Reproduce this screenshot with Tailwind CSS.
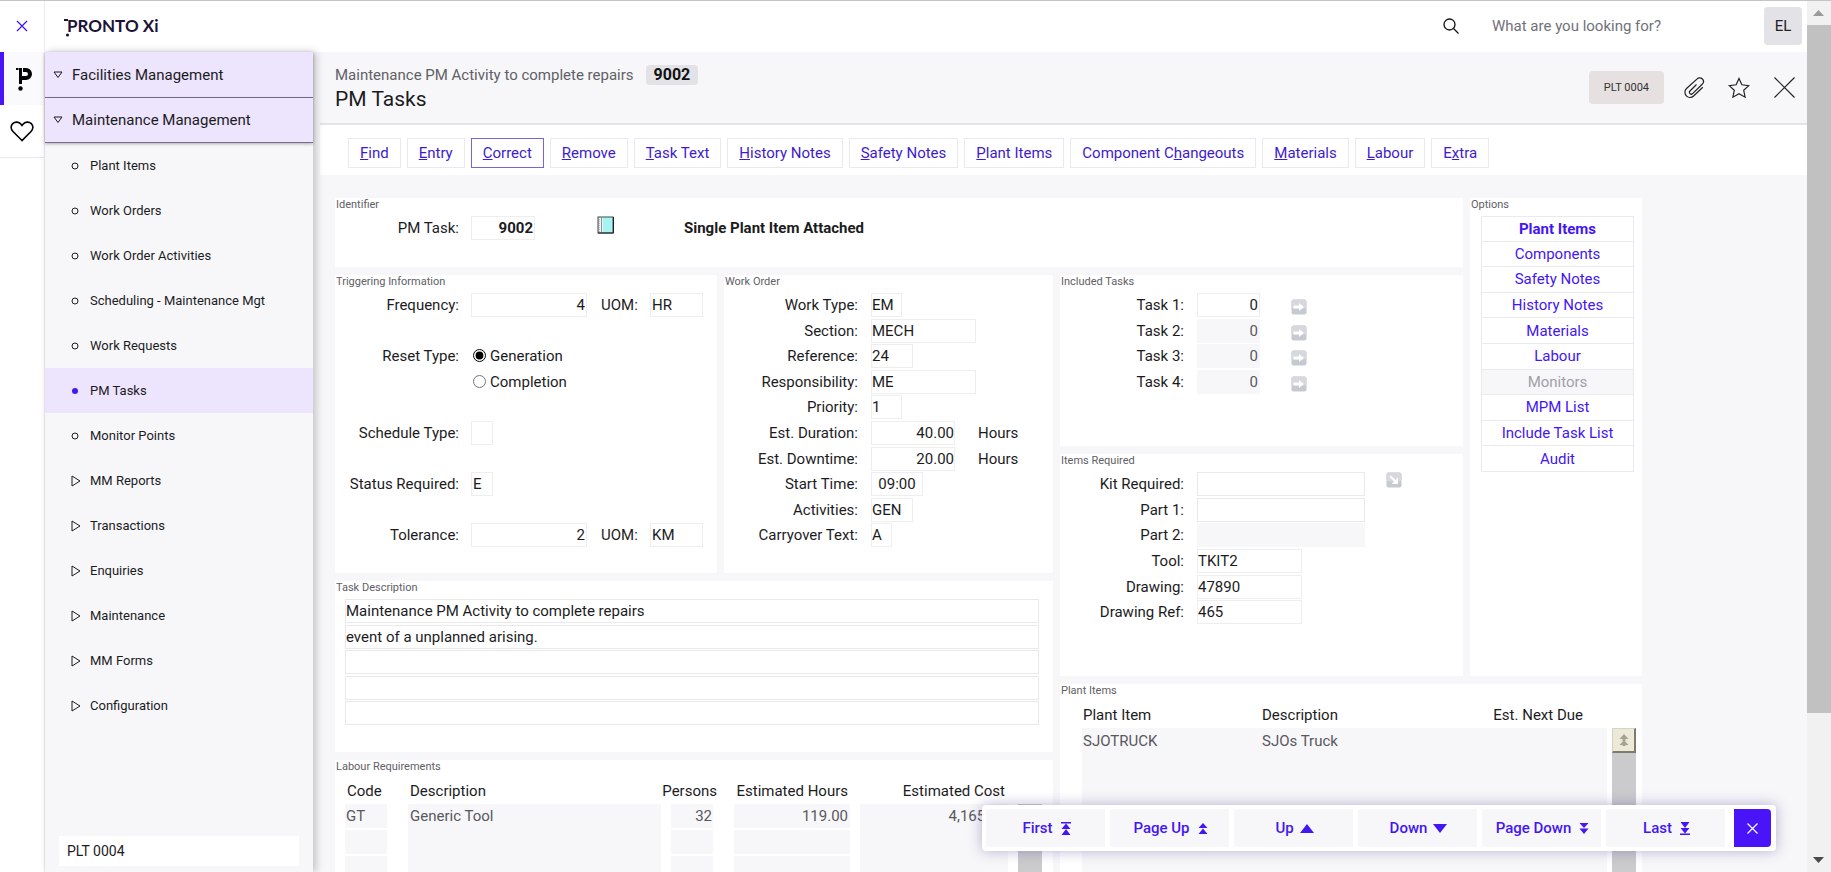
<!DOCTYPE html>
<html lang="en">
    <head>
        <meta charset="UTF-8">
        <meta name="viewport" content="width=device-width, initial-scale=1.0">
        <!-- Tailwind CDN -->
        <script src="https://cdn.jsdelivr.net/npm/@tailwindcss/browser@4"></script>
        <title>PM Tasks</title>
    </head>
    <body class="h-screen overflow-hidden bg-white font-[Roboto,sans-serif] text-[15px] leading-6 text-[#1c1c1e]">
        <svg class="hidden">
            <symbol id="tri-down" viewBox="0 0 10 8"><path d="M1 1h8L5 6.5z" fill="none" stroke="currentColor"/></symbol>
            <symbol id="tri-right" viewBox="0 0 10 12"><path d="M1 1v10l8-5z" fill="none" stroke="currentColor"/></symbol>
            <symbol id="dot" viewBox="0 0 8 8"><circle cx="4" cy="4" r="3" fill="none" stroke="currentColor"/></symbol>
            <symbol id="zoom-right" viewBox="0 0 16 16">
                <rect x=".5" y=".5" width="15" height="15" rx="2" fill="#c6c9d0"/>
                <rect x=".5" y=".5" width="15" height="9" rx="2" fill="#d6d8dd"/>
                <path d="M2.5 6.5H8V4l5 4-5 4V9.5H2.500z" fill="#fff"/>
            </symbol>
        </svg>
        <div class="flex h-full border-t border-[#c4c4c4]">
            <div class="flex min-w-0 flex-1 flex-col">

                <!-- Top bar -->
                <header class="flex h-[51px] shrink-0 items-center pb-px">
                    <button class="flex h-full w-[45px] items-center justify-center border-r border-[#ececf0] text-[#4316f4]" aria-label="Close menu">
                        <svg class="size-3" viewBox="0 0 12 12"><path d="M1 1l10 10M11 1L1 11" stroke="currentColor" stroke-width="1.300"/></svg>
                    </button>
                    <a href="#" class="relative ml-[22px] font-[Lato,sans-serif] text-[17px] font-bold text-[#1c1238]">PRONTO Xi
                        <svg class="absolute -left-1 top-0 h-6 w-2" viewBox="0 0 8 24"><path d="M1 5h4v2H1z" fill="currentColor"/><circle cx="4.500" cy="21" r="1.600" fill="currentColor"/></svg>
                    </a>
                    <div class="ml-auto flex items-center">
                        <svg class="size-4" viewBox="0 0 16 16" fill="none" stroke="#111" stroke-width="1.300"><circle cx="6.500" cy="6.500" r="5.500"/><path d="M10.500 10.500l5 5"/></svg>
                        <input type="search" aria-label="Search" placeholder="What are you looking for?" class="ml-[33px] w-[272px] outline-none placeholder:text-[#71717a]">
                        <button class="mr-[5px] size-[38px] rounded bg-[#e2e2e7] text-[#222]">EL</button>
                    </div>
                </header>

                <div class="flex min-h-0 flex-1">
                    <!-- Icon rail -->
                    <nav class="w-[45px] shrink-0 border-r border-[#ececf0]">
                        <a href="#" aria-label="Pronto" class="flex h-[53px] items-center justify-center border-l-4 border-[#4a14f8] bg-[#fafafd]">
                            <svg class="h-6 w-4" viewBox="0 0 16 24">
                                <path d="M0 1h2.500v2H0zM3 1h3v16H3z"/>
                                <path d="M7 3h3a4 4 0 0 1 0 8H5" fill="none" stroke="#000" stroke-width="4"/>
                                <circle cx="4.500" cy="21.500" r="2.200"/>
                            </svg>
                        </a>
                        <a href="#" aria-label="Favourites" class="flex h-[53px] items-center justify-center border-b border-[#e8e8ec]">
                            <svg class="h-[21px] w-6" viewBox="0 0 24 21"><path d="M12 19.500L3 10.500C.5 8 .6 4.500 2.700 2.600 5.200.3 9 .8 11 3.200L12 4.500l1-1.300C15 .8 18.800.3 21.300 2.600c2.100 1.900 2.200 5.400-.3 7.900z" fill="none" stroke="#000" stroke-width="1.600"/></svg>
                        </a>
                    </nav>

                    <!-- Menu -->
                    <nav class="z-10 flex w-[268px] shrink-0 flex-col bg-[#f7f7fa] shadow-[3px_0_8px_rgba(0,0,0,0.22)]">
                        <a href="#" class="relative flex h-[46px] items-center border-b border-[#77708a] bg-[#ede4fd] shadow-[0_1px_3px_rgba(0,0,0,0.3)]">
                            <svg class="ml-2 mr-[9px] h-2 w-2.5"><use href="#tri-down"/></svg>Facilities Management
                        </a>
                        <a href="#" class="relative flex h-[45px] items-center border-b border-[#77708a] bg-[#ede4fd] shadow-[0_1px_3px_rgba(0,0,0,0.3)]">
                            <svg class="ml-2 mr-[9px] h-2 w-2.5"><use href="#tri-down"/></svg>Maintenance Management
                        </a>
                        <ul class="text-[13px]">
                            <li><a href="#" class="flex h-[45px] items-center gap-[11px] pl-[26px]"><svg class="size-2"><use href="#dot"/></svg>Plant Items</a></li>
                            <li><a href="#" class="flex h-[45px] items-center gap-[11px] pl-[26px]"><svg class="size-2"><use href="#dot"/></svg>Work Orders</a></li>
                            <li><a href="#" class="flex h-[45px] items-center gap-[11px] pl-[26px]"><svg class="size-2"><use href="#dot"/></svg>Work Order Activities</a></li>
                            <li><a href="#" class="flex h-[45px] items-center gap-[11px] pl-[26px]"><svg class="size-2"><use href="#dot"/></svg>Scheduling - Maintenance Mgt</a></li>
                            <li><a href="#" class="flex h-[45px] items-center gap-[11px] pl-[26px]"><svg class="size-2"><use href="#dot"/></svg>Work Requests</a></li>
                            <li><a href="#" class="flex h-[45px] items-center gap-[11px] bg-[#ede4fd] pl-[26px]"><span class="ml-px mr-px size-1.5 rounded-full bg-[#4316f4]"></span>PM Tasks</a></li>
                            <li><a href="#" class="flex h-[45px] items-center gap-[11px] pl-[26px]"><svg class="size-2"><use href="#dot"/></svg>Monitor Points</a></li>
                            <li><a href="#" class="flex h-[45px] items-center gap-[9px] pl-[26px]"><svg class="h-3 w-2.5"><use href="#tri-right"/></svg>MM Reports</a></li>
                            <li><a href="#" class="flex h-[45px] items-center gap-[9px] pl-[26px]"><svg class="h-3 w-2.5"><use href="#tri-right"/></svg>Transactions</a></li>
                            <li><a href="#" class="flex h-[45px] items-center gap-[9px] pl-[26px]"><svg class="h-3 w-2.5"><use href="#tri-right"/></svg>Enquiries</a></li>
                            <li><a href="#" class="flex h-[45px] items-center gap-[9px] pl-[26px]"><svg class="h-3 w-2.5"><use href="#tri-right"/></svg>Maintenance</a></li>
                            <li><a href="#" class="flex h-[45px] items-center gap-[9px] pl-[26px]"><svg class="h-3 w-2.5"><use href="#tri-right"/></svg>MM Forms</a></li>
                            <li><a href="#" class="flex h-[45px] items-center gap-[9px] pl-[26px]"><svg class="h-3 w-2.5"><use href="#tri-right"/></svg>Configuration</a></li>
                        </ul>
                        <input type="text" aria-label="Company" value="PLT 0004" class="mx-3.5 mb-1.5 mt-auto h-[30px] bg-white px-2 text-sm">
                    </nav>

                    <main class="flex min-w-0 flex-1 flex-col bg-[#f7f7fa] pl-[7px]">
                        <div class="flex h-[73px] shrink-0 items-center border-b-2 border-[#e3e3e8] pl-[15px]">
                            <div class="pb-0.5">
                                <div class="flex items-center gap-3 text-[#606066]">Maintenance PM Activity to complete repairs
                                    <span class="rounded bg-[#e2e2e7] px-2 text-base leading-5 font-bold text-[#111]">9002</span>
                                </div>
                                <h1 class="text-[21px]">PM Tasks</h1>
                            </div>
                            <div class="ml-auto flex items-center pr-3">
                                <button class="h-[33px] rounded bg-[#e6e0e1] px-[15px] text-[11px] text-[#333]">PLT 0004</button>
                                <button class="ml-[19px]" aria-label="Attachments">
                                    <svg class="size-[22px]" viewBox="0 0 22 22" fill="none" stroke="#222" stroke-width="1.200"><path d="M13.500 7.500L7 14a1.800 1.800 0 0 0 2.600 2.600l9.600-9.300a3.800 3.800 0 0 0 .2-5.300 3.800 3.800 0 0 0-5.500.1L3.500 11.500a5.200 5.200 0 0 0 .1 7.600c2 1.900 5 1.700 7-.1l9.200-8.800"/></svg>
                                </button>
                                <button class="ml-[23px]" aria-label="Favourite">
                                    <svg class="size-[22px]" viewBox="0 0 22 22" fill="none" stroke="#222" stroke-width="1.200"><path d="M11 1.500l2.900 6.300 6.900.8-5.100 4.700 1.400 6.900-6.100-3.400-6.100 3.400 1.400-6.900L1.200 8.600l6.900-.8z"/></svg>
                                </button>
                                <button class="ml-6" aria-label="Close">
                                    <svg class="size-[21px]" viewBox="0 0 21 21"><path d="M.5.5l20 20M20.500.5l-20 20" stroke="#222" stroke-width="1.200"/></svg>
                                </button>
                            </div>
                        </div>

                        <!-- Toolbar -->
                        <div class="flex h-[50px] shrink-0 items-center gap-1.5 bg-white pl-7 pt-[5px] text-[#3d1bd0]">
                            <button class="h-[30px] border border-[#e9e9f0] px-[11px]"><u>F</u>ind</button>
                            <button class="h-[30px] border border-[#e9e9f0] px-[11px]"><u>E</u>ntry</button>
                            <button class="h-[30px] border border-[#7a63d8] px-[11px]"><u>C</u>orrect</button>
                            <button class="h-[30px] border border-[#e9e9f0] px-[11px]"><u>R</u>emove</button>
                            <button class="h-[30px] border border-[#e9e9f0] px-[11px]"><u>T</u>ask Text</button>
                            <button class="h-[30px] border border-[#e9e9f0] px-[11px]"><u>H</u>istory Notes</button>
                            <button class="h-[30px] border border-[#e9e9f0] px-[11px]"><u>S</u>afety Notes</button>
                            <button class="h-[30px] border border-[#e9e9f0] px-[11px]"><u>P</u>lant Items</button>
                            <button class="h-[30px] border border-[#e9e9f0] px-[11px]">Component C<u>h</u>angeouts</button>
                            <button class="h-[30px] border border-[#e9e9f0] px-[11px]"><u>M</u>aterials</button>
                            <button class="h-[30px] border border-[#e9e9f0] px-[11px]"><u>L</u>abour</button>
                            <button class="h-[30px] border border-[#e9e9f0] px-[11px]">E<u>x</u>tra</button>
                        </div>

                        <div class="min-h-0 flex-1 overflow-hidden pl-[15px] pr-[165px] pt-[23px]">
                            <div class="grid grid-cols-[382fr_329fr_403fr_172fr] gap-x-[7px] gap-y-2">

                                <section class="col-span-3 min-h-[69px] bg-white">
                                    <h2 class="h-[18px] pl-px text-[11px] leading-3.5 text-[#606066]">Identifier</h2>
                                    <div class="flex items-start">
                                        <label for="task" class="mr-3 w-[124px] text-right">PM Task:</label>
                                        <input id="task" type="text" value="9002" class="h-6 w-16 border border-[#eeeef1] px-px text-right font-bold">
                                        <button class="ml-[62px]" aria-label="Notes">
                                            <svg class="size-[18px]" viewBox="0 0 18 18"><rect x="1" y="1" width="15" height="16" fill="#a5f3f3" stroke="#3f4a4d"/><path d="M2 2h4v14H2z" fill="#e9f6f6"/><path d="M4.500 1v16" stroke="#9a8a92"/><path d="M2 3v13" stroke="#b26a6a" stroke-dasharray="1 1"/><path d="M16.500 1v16H1" stroke="#222" fill="none"/></svg>
                                        </button>
                                        <strong class="ml-[69px]">Single Plant Item Attached</strong>
                                    </div>
                                </section>

                                <section class="row-span-2 bg-white">
                                    <h2 class="h-[18px] pl-px text-[11px] leading-3.5 text-[#606066]">Options</h2>
                                    <div class="ml-[11px] mr-2 grid h-64 grid-rows-10 text-[#4316f4]">
                                        <button class="border border-[#e9e9f0] font-bold">Plant Items</button>
                                        <button class="border border-t-0 border-[#e9e9f0]">Components</button>
                                        <button class="border border-t-0 border-[#e9e9f0]">Safety Notes</button>
                                        <button class="border border-t-0 border-[#e9e9f0]">History Notes</button>
                                        <button class="border border-t-0 border-[#e9e9f0]">Materials</button>
                                        <button class="border border-t-0 border-[#e9e9f0]">Labour</button>
                                        <button disabled class="border border-t-0 border-[#e9e9f0] bg-[#f7f7fa] text-[#a0a0a6]">Monitors</button>
                                        <button class="border border-t-0 border-[#e9e9f0]">MPM List</button>
                                        <button class="border border-t-0 border-[#e9e9f0]">Include Task List</button>
                                        <button class="border border-t-0 border-[#e9e9f0]">Audit</button>
                                    </div>
                                </section>

                                <div class="col-span-2 row-span-2 grid grid-cols-[382fr_329fr] content-start gap-x-[7px] gap-y-2">
                                    <section class="min-h-[298px] bg-white">
                                        <h2 class="h-[18px] pl-px text-[11px] leading-3.5 text-[#606066]">Triggering Information</h2>
                                        <div class="grid h-64 grid-cols-[124px_1fr] grid-rows-10 gap-x-3">
                                            <label for="freq" class="text-right">Frequency:</label>
                                            <div class="flex">
                                                <input id="freq" type="text" value="4" class="h-6 w-[116px] border border-[#eeeef1] px-px text-right">
                                                <label for="freq-uom" class="ml-3.5 w-[49px]">UOM:</label>
                                                <input id="freq-uom" type="text" value="HR" class="h-6 w-[53px] border border-[#eeeef1] px-px">
                                            </div>
                                            <span class="col-span-2"></span>
                                            <span class="text-right">Reset Type:</span>
                                            <label class="flex gap-1"><input type="radio" name="reset" checked class="ml-0.5 mt-[5px] size-[13px] accent-black">Generation</label>
                                            <span></span>
                                            <label class="flex gap-1"><input type="radio" name="reset" class="ml-0.5 mt-[5px] size-[13px] accent-black">Completion</label>
                                            <span class="col-span-2"></span>
                                            <label for="sched" class="text-right">Schedule Type:</label>
                                            <input id="sched" type="text" class="h-6 w-[22px] border border-[#eeeef1] px-px">
                                            <span class="col-span-2"></span>
                                            <label for="status" class="text-right">Status Required:</label>
                                            <input id="status" type="text" value="E" class="h-6 w-[22px] border border-[#eeeef1] px-px">
                                            <span class="col-span-2"></span>
                                            <label for="tol" class="text-right">Tolerance:</label>
                                            <div class="flex">
                                                <input id="tol" type="text" value="2" class="h-6 w-[116px] border border-[#eeeef1] px-px text-right">
                                                <label for="tol-uom" class="ml-3.5 w-[49px]">UOM:</label>
                                                <input id="tol-uom" type="text" value="KM" class="h-6 w-[53px] border border-[#eeeef1] px-px">
                                            </div>
                                        </div>
                                    </section>

                                    <section class="min-h-[298px] bg-white">
                                        <h2 class="h-[18px] pl-px text-[11px] leading-3.5 text-[#606066]">Work Order</h2>
                                        <div class="grid h-64 grid-cols-[134px_1fr] grid-rows-10 gap-x-[13px]">
                                            <label for="wtype" class="text-right">Work Type:</label>
                                            <input id="wtype" type="text" value="EM" class="h-6 w-[31px] border border-[#eeeef1]">
                                            <label for="section" class="text-right">Section:</label>
                                            <input id="section" type="text" value="MECH" class="h-6 w-[105px] border border-[#eeeef1]">
                                            <label for="ref" class="text-right">Reference:</label>
                                            <input id="ref" type="text" value="24" class="h-6 w-[42px] border border-[#eeeef1]">
                                            <label for="resp" class="text-right">Responsibility:</label>
                                            <input id="resp" type="text" value="ME" class="h-6 w-[105px] border border-[#eeeef1]">
                                            <label for="prio" class="text-right">Priority:</label>
                                            <input id="prio" type="text" value="1" class="h-6 w-[31px] border border-[#eeeef1]">
                                            <label for="dur" class="text-right">Est. Duration:</label>
                                            <div class="flex gap-[23px]"><input id="dur" type="text" value="40.00" class="h-6 w-[84px] border border-[#eeeef1] text-right">Hours</div>
                                            <label for="down" class="text-right">Est. Downtime:</label>
                                            <div class="flex gap-[23px]"><input id="down" type="text" value="20.00" class="h-6 w-[84px] border border-[#eeeef1] text-right">Hours</div>
                                            <label for="start" class="text-right">Start Time:</label>
                                            <input id="start" type="text" value="09:00" class="h-6 w-[52px] border border-[#eeeef1] text-center">
                                            <label for="act" class="text-right">Activities:</label>
                                            <input id="act" type="text" value="GEN" class="h-6 w-[42px] border border-[#eeeef1]">
                                            <label for="carry" class="text-right">Carryover Text:</label>
                                            <input id="carry" type="text" value="A" class="h-6 w-[21px] border border-[#eeeef1]">
                                        </div>
                                    </section>

                                    <section class="col-span-2 min-h-[171px] bg-white">
                                        <h2 class="h-[18px] pl-px text-[11px] leading-3.5 text-[#606066]">Task Description</h2>
                                        <div class="ml-2.5 mr-3.5 grid h-32 grid-rows-5">
                                            <input type="text" aria-label="Description line 1" value="Maintenance PM Activity to complete repairs" class="h-6 border border-[#e9e9ec]">
                                            <input type="text" aria-label="Description line 2" value="event of a unplanned arising." class="h-6 border border-[#e9e9ec]">
                                            <input type="text" aria-label="Description line 3" class="h-6 border border-[#e9e9ec]">
                                            <input type="text" aria-label="Description line 4" class="h-6 border border-[#e9e9ec]">
                                            <input type="text" aria-label="Description line 5" class="h-6 border border-[#e9e9ec]">
                                        </div>
                                    </section>

                                    <section class="col-span-2 min-h-[170px] bg-white">
                                        <h2 class="h-[18px] pl-px text-[11px] leading-3.5 text-[#606066]">Labour Requirements</h2>
                                        <div class="ml-2.5 mr-[11px] flex gap-2.5">
                                            <table class="min-w-0 flex-1 table-fixed border-separate border-spacing-0 text-[#58585e]">
                                                <colgroup><col class="w-[63px]"><col><col class="w-[73px]"><col class="w-[126px]"><col class="w-[148px]"></colgroup>
                                                <thead class="text-left text-[#1c1c1e]">
                                                    <tr class="h-[26px]">
                                                        <th class="pl-0.5 font-normal">Code</th>
                                                        <th class="pl-0.5 font-normal">Description</th>
                                                        <th class="pr-[17px] text-right font-normal">Persons</th>
                                                        <th class="whitespace-nowrap pr-3 text-right font-normal">Estimated Hours</th>
                                                        <th class="pr-[3px] text-right font-normal">Estimated Cost</th>
                                                    </tr>
                                                </thead>
                                                <tbody class="bg-[#f7f7f9]">
                                                    <tr class="h-[26px]">
                                                        <td class="border-b-2 border-r-[21px] border-white pl-px">GT</td>
                                                        <td class="pb-0.5 pl-0.5">Generic Tool</td>
                                                        <td class="border-b-2 border-l-[10px] border-r-[21px] border-white pr-px text-right">32</td>
                                                        <td class="border-b-2 border-r-[10px] border-white pr-0.5 text-right">119.00</td>
                                                        <td class="pb-0.5 pr-0.5 text-right">4,165.00</td>
                                                    </tr>
                                                    <tr class="h-[26px]">
                                                        <td class="border-b-2 border-r-[21px] border-white"></td>
                                                        <td></td>
                                                        <td class="border-b-2 border-l-[10px] border-r-[21px] border-white"></td>
                                                        <td class="border-b-2 border-r-[10px] border-white"></td>
                                                        <td></td>
                                                    </tr>
                                                    <tr class="h-[26px]">
                                                        <td class="border-b-2 border-r-[21px] border-white"></td>
                                                        <td></td>
                                                        <td class="border-b-2 border-l-[10px] border-r-[21px] border-white"></td>
                                                        <td class="border-b-2 border-r-[10px] border-white"></td>
                                                        <td></td>
                                                    </tr>
                                                </tbody>
                                            </table>
                                            <div class="mt-[26px] w-6 bg-[#cbcbcd]"></div>
                                        </div>
                                    </section>
                                </div>

                                <div class="flex flex-col gap-2">
                                    <section class="min-h-[171px] bg-white">
                                        <h2 class="h-[18px] pl-px text-[11px] leading-3.5 text-[#606066]">Included Tasks</h2>
                                        <div class="grid h-[102px] grid-cols-[124px_63px_1fr] grid-rows-4 gap-x-[13px]">
                                            <label for="t1" class="text-right">Task 1:</label>
                                            <input id="t1" type="text" value="0" class="h-6 border border-[#eeeef1] px-px text-right">
                                            <button class="ml-[18px] mt-1.5 size-4" aria-label="Zoom task 1"><svg class="size-4"><use href="#zoom-right"/></svg></button>
                                            <label for="t2" class="text-right">Task 2:</label>
                                            <input id="t2" type="text" value="0" disabled class="h-6 border border-[#f7f7fa] bg-[#f7f7fa] px-px text-right text-[#58585e]">
                                            <button class="ml-[18px] mt-1.5 size-4" aria-label="Zoom task 2"><svg class="size-4"><use href="#zoom-right"/></svg></button>
                                            <label for="t3" class="text-right">Task 3:</label>
                                            <input id="t3" type="text" value="0" disabled class="h-6 border border-[#f7f7fa] bg-[#f7f7fa] px-px text-right text-[#58585e]">
                                            <button class="ml-[18px] mt-1.5 size-4" aria-label="Zoom task 3"><svg class="size-4"><use href="#zoom-right"/></svg></button>
                                            <label for="t4" class="text-right">Task 4:</label>
                                            <input id="t4" type="text" value="0" disabled class="h-6 border border-[#f7f7fa] bg-[#f7f7fa] px-px text-right text-[#58585e]">
                                            <button class="ml-[18px] mt-1.5 size-4" aria-label="Zoom task 4"><svg class="size-4"><use href="#zoom-right"/></svg></button>
                                        </div>
                                    </section>

                                    <section class="min-h-[222px] bg-white">
                                        <h2 class="h-[18px] pl-px text-[11px] leading-3.5 text-[#606066]">Items Required</h2>
                                        <div class="grid h-[154px] grid-cols-[124px_1fr] grid-rows-6 gap-x-[13px]">
                                            <label for="kit" class="text-right">Kit Required:</label>
                                            <div class="flex items-start">
                                                <input id="kit" type="text" class="h-6 w-[168px] border border-[#e9e9ec]">
                                                <button class="ml-[21px] size-4" aria-label="Expand kit">
                                                    <svg class="size-4" viewBox="0 0 16 16"><rect x=".5" y=".5" width="15" height="15" rx="2" fill="#c6c9d0"/><rect x=".5" y=".5" width="15" height="9" rx="2" fill="#d6d8dd"/><path d="M3.500 5L5 3.500l4.500 4.500 2.500-2.500V12H5.500L8 9.500z" fill="#fff"/></svg>
                                                </button>
                                            </div>
                                            <label for="p1" class="text-right">Part 1:</label>
                                            <input id="p1" type="text" class="h-6 w-[168px] border border-[#e9e9ec]">
                                            <label for="p2" class="text-right">Part 2:</label>
                                            <input id="p2" type="text" disabled class="h-6 w-[168px] bg-[#f7f7fa]">
                                            <label for="tool" class="text-right">Tool:</label>
                                            <input id="tool" type="text" value="TKIT2" class="h-6 w-[105px] border border-[#eeeef1]">
                                            <label for="draw" class="text-right">Drawing:</label>
                                            <input id="draw" type="text" value="47890" class="h-6 w-[105px] border border-[#eeeef1]">
                                            <label for="drawref" class="text-right">Drawing Ref:</label>
                                            <input id="drawref" type="text" value="465" class="h-6 w-[105px] border border-[#eeeef1]">
                                        </div>
                                    </section>
                                </div>

                                <section class="col-span-2 min-h-[260px] bg-white">
                                    <h2 class="h-[18px] pl-px text-[11px] leading-3.5 text-[#606066]">Plant Items</h2>
                                    <div class="ml-[22px] mr-1.5 flex gap-[5px]">
                                        <table class="min-w-0 flex-1 table-fixed text-[#58585e]">
                                            <colgroup><col class="w-[178px]"><col><col class="w-[150px]"></colgroup>
                                            <thead class="text-left text-[#1c1c1e]">
                                                <tr class="h-[26px]">
                                                    <th class="pl-px font-normal">Plant Item</th>
                                                    <th class="pl-0.5 font-normal">Description</th>
                                                    <th class="pr-6 text-right font-normal">Est. Next Due</th>
                                                </tr>
                                            </thead>
                                            <tbody class="bg-[#f7f7f9]">
                                                <tr class="h-[26px]">
                                                    <td class="pl-px">SJOTRUCK</td>
                                                    <td class="pl-0.5">SJOs Truck</td>
                                                    <td></td>
                                                </tr>
                                                <tr class="h-[160px]"><td></td><td></td><td></td></tr>
                                            </tbody>
                                        </table>
                                        <div class="mt-[26px] w-6 bg-[#cbcbcd]">
                                            <button class="flex h-[25px] w-6 items-center justify-center border border-b-2 border-r-2 border-[#d5d3c8] border-b-[#7d7c70] border-r-[#7d7c70] bg-[#ece9d8]" aria-label="Page up">
                                                <svg class="h-3 w-2.5" viewBox="0 0 10 12"><path d="M5 0l4.500 5h-9zM5 6l4.500 5h-9z" fill="#a5a493"/><path d="M3.500 5h3v2h-3zM3.500 11h3v1h-3z" fill="#a5a493"/></svg>
                                            </button>
                                        </div>
                                    </div>
                                </section>
                            </div>
                        </div>
                    </main>
                </div>
            </div>

            <!-- Window scrollbar -->
            <div class="flex w-6 shrink-0 flex-col bg-[#f1f1f1]">
                <svg class="h-6 w-6 shrink-0" viewBox="0 0 24 24"><path d="M6 15l5.500-6 5.500 6z" fill="#9b9b9b"/></svg>
                <div class="h-[79%] bg-[#c1c1c1]"></div>
                <svg class="mt-auto h-6 w-6 shrink-0" viewBox="0 0 24 24"><path d="M6 9l5.500 6 5.500-6z" fill="#4a4a4a"/></svg>
            </div>
        </div>

        <!-- Record navigation -->
        <div class="fixed bottom-[21px] right-[55px] z-20 flex gap-[5px] rounded bg-white p-1 pr-[5px] font-medium text-[#4316f4] shadow-[0_0_14px_rgba(60,40,120,0.35)]">
            <button class="flex h-[38px] w-[119px] items-center justify-center gap-2 bg-[#f7f7fa] pl-0.5">First
                <svg class="h-[13px] w-2.5" viewBox="0 0 10 13" fill="currentColor"><path d="M0 0h10v1.500H0zM5 1.500L9.500 7h-9zM5 7l4.500 6h-9z"/></svg>
            </button>
            <button class="flex h-[38px] w-[119px] items-center justify-center gap-2 bg-[#f7f7fa] pl-0.5">Page Up
                <svg class="h-[11px] w-2.5" viewBox="0 0 10 11" fill="currentColor"><path d="M5 0l4.500 5h-9zM5 5.500l4.500 5.500h-9z"/></svg>
            </button>
            <button class="flex h-[38px] w-[119px] items-center justify-center gap-1.5 bg-[#f7f7fa] pl-0.5">Up
                <svg class="h-[9px] w-3.5" viewBox="0 0 14 9" fill="currentColor"><path d="M7 0l7 9H0z"/></svg>
            </button>
            <button class="flex h-[38px] w-[119px] items-center justify-center gap-1.5 bg-[#f7f7fa] pl-0.5">Down
                <svg class="h-[9px] w-3.5" viewBox="0 0 14 9" fill="currentColor"><path d="M7 9l7-9H0z"/></svg>
            </button>
            <button class="flex h-[38px] w-[119px] items-center justify-center gap-2 bg-[#f7f7fa] pl-0.5">Page Down
                <svg class="h-[11px] w-2.5" viewBox="0 0 10 11" fill="currentColor"><path d="M5 5l4.500-5h-9zM5 11l4.500-5.500h-9z"/></svg>
            </button>
            <button class="flex h-[38px] w-[119px] items-center justify-center gap-2 bg-[#f7f7fa] pl-0.5">Last
                <svg class="h-[13px] w-2.5" viewBox="0 0 10 13" fill="currentColor"><path d="M0 11.500h10V13H0zM5 11.500L9.500 6h-9zM5 6l4.500-6h-9z"/></svg>
            </button>
            <button class="ml-1 flex h-[38px] w-[37px] items-center justify-center rounded-r bg-[#4a14f8] text-white" aria-label="Close navigation">
                <svg class="size-[11px]" viewBox="0 0 11 11"><path d="M.5.5l10 10M10.500.5l-10 10" stroke="currentColor" stroke-width="1.200"/></svg>
            </button>
        </div>
    </body>
</html>
